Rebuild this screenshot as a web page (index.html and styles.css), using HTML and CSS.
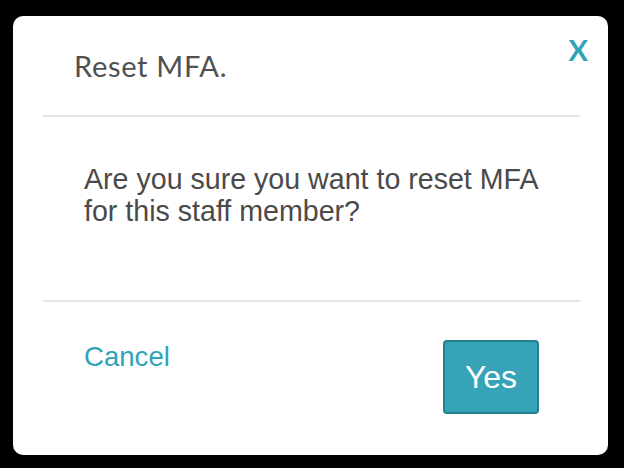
FILE: index.html
```html
<!DOCTYPE html>
<html>
<head>
<meta charset="utf-8">
<link rel="stylesheet" href="styles.css">
</head>
<body>
<div class="dialog">
  <div class="header">
    <h2 class="title">Reset MFA.</h2>
    <span class="close">X</span>
  </div>
  <div class="divider"></div>
  <div class="content">
    <p class="message">Are you sure you want to reset MFA<br>for this staff member?</p>
  </div>
  <div class="divider"></div>
  <div class="footer">
    <a class="cancel">Cancel</a>
    <button class="yes">Yes</button>
  </div>
</div>
</body>
</html>
```
FILE: styles.css
```css
html, body {
  margin: 0;
  padding: 0;
  background: #000;
  width: 624px;
  height: 468px;
  overflow: hidden;
}
.dialog {
  margin: 16px 16px 0 13px;
  width: 595px;
  height: 439px;
  background: #fff;
  border-radius: 10px;
  box-sizing: border-box;
  display: flex;
  flex-direction: column;
}
.header {
  position: relative;
  height: 99px;
  display: flex;
  align-items: flex-start;
}
.title {
  margin: 0;
  padding: 32px 0 0 61px;
  font-family: "Lato", "Open Sans", sans-serif;
  font-weight: 400;
  font-size: 29px;
  letter-spacing: 0.7px;
  line-height: 36px;
  color: #505050;
}
.close {
  position: absolute;
  right: 20px;
  top: 16px;
  font-family: "Lato", "Liberation Sans", sans-serif;
  font-weight: 700;
  font-size: 29px;
  color: #2fa3b8;
}
.divider {
  height: 2px;
  background: #e4e4e4;
  margin: 0 28px 0 30px;
}
.content {
  height: 183px;
  box-sizing: border-box;
  padding: 46px 0 0 71px;
}
.message {
  margin: 0;
  font-family: "Liberation Sans", Arial, sans-serif;
  font-size: 28.6px;
  line-height: 32px;
  color: #4a4a4a;
}
.footer {
  display: flex;
  justify-content: space-between;
  align-items: flex-start;
  padding: 38px 69px 0 71px;
}
.cancel {
  font-family: "Liberation Sans", Arial, sans-serif;
  font-size: 27.6px;
  line-height: 34px;
  color: #2fa3b8;
}
.yes {
  width: 96px;
  height: 74px;
  background: #36a4b6;
  border: 2px solid #247f8e;
  border-radius: 4px;
  color: #fff;
  font-family: "Liberation Sans", Arial, sans-serif;
  font-size: 32px;
  padding: 0;
}
```
